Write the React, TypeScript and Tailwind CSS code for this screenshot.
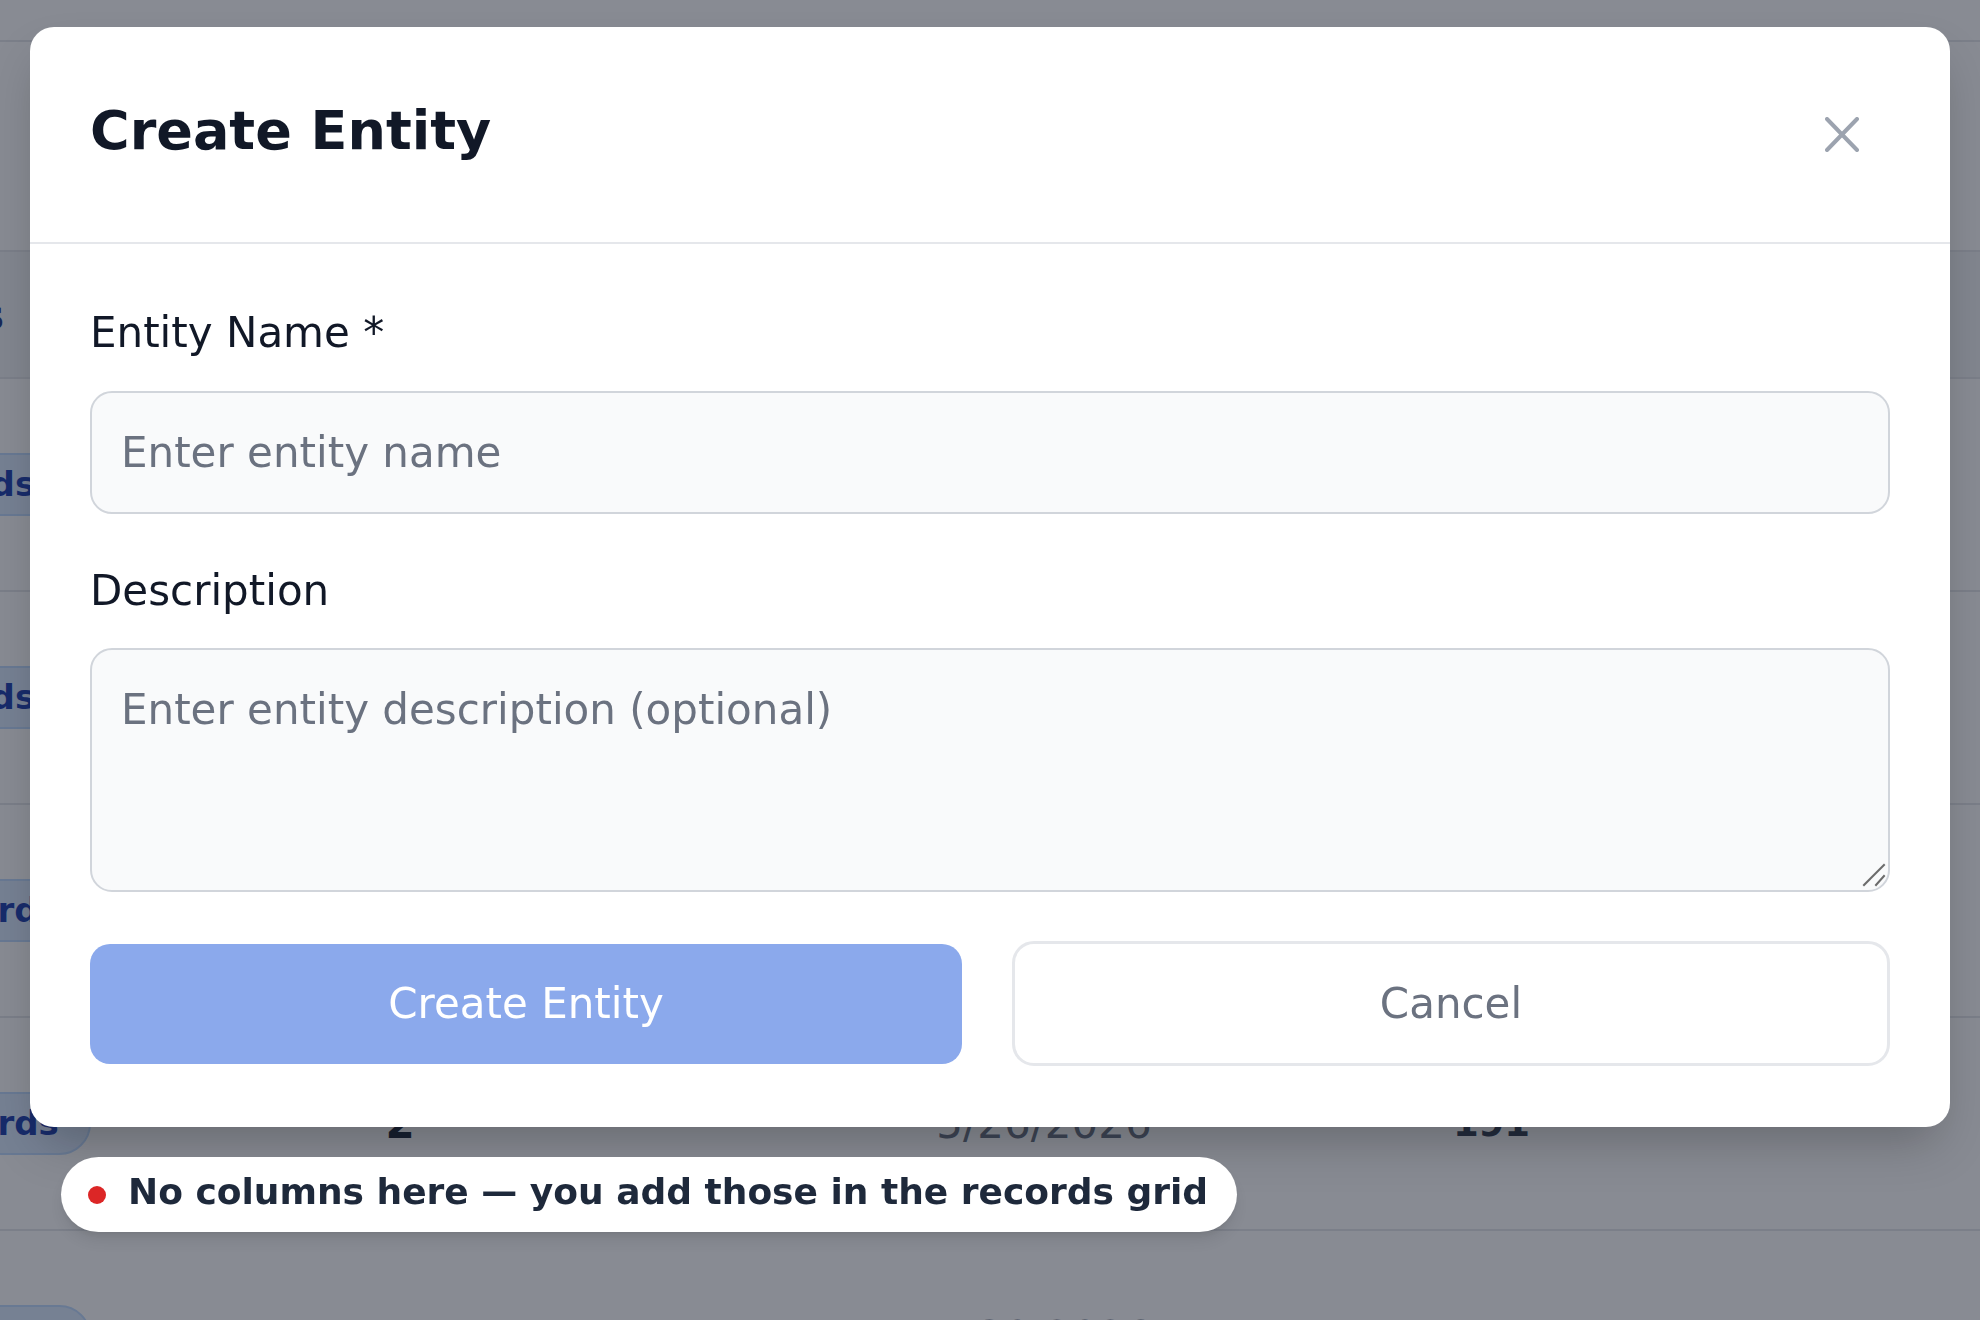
import React from 'react';

interface RecordRow {
  badge: string;
  count: string;
  date: string;
  total: string;
}

const rows: RecordRow[] = [
  { badge: '3 records', count: '5', date: '4/12/2026', total: '328' },
  { badge: '8 records', count: '3', date: '4/28/2026', total: '245' },
  { badge: '12 records', count: '4', date: '5/09/2026', total: '212' },
  { badge: '24 records', count: '2', date: '5/26/2026', total: '191' },
  { badge: '16 records', count: '1', date: '7/30/2026', total: '87' },
];

const font = "font-['DejaVu_Sans','Liberation_Sans',sans-serif]";

function CloseIcon() {
  return (
    <svg width="34" height="35" viewBox="0 0 34 35" fill="none" stroke="#9ca3af" strokeWidth="4" strokeLinecap="round">
      <path d="M2 2 32 33" />
      <path d="M32 2 2 33" />
    </svg>
  );
}

// resize grip drawn over the textarea corner
function ResizeGrip() {
  return (
    <svg width="24" height="24" viewBox="0 0 24 24" fill="none" stroke="#6b6b6b" strokeWidth="2" strokeLinecap="square">
      <path d="M2 22 22 2" />
      <path d="M14 22 22 13" />
    </svg>
  );
}

export default function App() {
  return (
    <div className={`h-screen overflow-hidden bg-white ${font}`}>
      {/* page behind the dialog */}
      <div className="h-[42px] border-b-2 border-gray-200" />
      <div className="h-[208px]" />
      <div className="h-[129px] border-y-2 border-gray-200 bg-gray-100 flex items-center">
        <div className="w-[4px] flex justify-end">
          <span className="whitespace-nowrap text-[40px] font-bold text-[#1e3a8a]">Records</span>
        </div>
      </div>
      {rows.map(row => (
        <div key={row.date} className="h-[213px] border-b-2 border-gray-200 flex items-center">
          <div className="w-[269px] -ml-[177px] shrink-0 flex">
            <span className="shrink-0 whitespace-nowrap h-[63px] flex items-center rounded-full border-2 border-[#bfdbfe] bg-[#dbeafe] px-[30px] text-[34px] font-bold text-[#1e40af]">
              {row.badge}
            </span>
          </div>
          <div className="w-[616px] shrink-0 text-center text-[42px] font-semibold text-gray-800">{row.count}</div>
          <div className="w-[672px] shrink-0 text-center text-[42px] text-gray-500">{row.date}</div>
          <div className="w-[223px] shrink-0 text-center text-[37px] font-bold text-gray-700">{row.total}</div>
        </div>
      ))}

      {/* overlay */}
      <div className="fixed inset-0 bg-[#111827]/50" />

      {/* dialog */}
      <div className="fixed left-[30px] right-[30px] top-[27px] rounded-3xl bg-white shadow-2xl">
        <div className="h-[217px] border-b-2 border-[#e5e7eb] flex items-center justify-between px-[60px]">
          <h2 className="mb-[8px] text-[54px] font-bold text-[#111827] leading-none">Create Entity</h2>
          <button className="mr-[31px] flex items-center">
            <CloseIcon />
          </button>
        </div>

        <div className="px-[60px] pt-[57px] pb-[61px]">
          <label className="block text-[42px] leading-[1.5] text-[#111827] mb-[27px]">Entity Name *</label>
          <input
            className="block w-full rounded-[22px] border-2 border-[#d1d5db] bg-[#f9fafb] px-[29px] py-[28px] text-[42px] leading-[1.5] text-[#111827] placeholder:text-[#6b7280] outline-none"
            placeholder="Enter entity name"
          />

          <label className="block mt-[45px] text-[42px] leading-[1.5] text-[#111827] mb-[26px]">Description</label>
          <div className="relative">
            <textarea
              className="block w-full h-[244px] rounded-[22px] border-2 border-[#d1d5db] bg-[#f9fafb] px-[29px] py-[28px] text-[42px] leading-[1.5] text-[#111827] placeholder:text-[#6b7280] outline-none resize-none"
              placeholder="Enter entity description (optional)"
            />
            <div className="pointer-events-none absolute right-[4px] bottom-[5px]">
              <ResizeGrip />
            </div>
          </div>

          <div className="mt-[49px] flex items-center gap-[50px]">
            <button className="flex-1 h-[120px] rounded-[20px] bg-[#8ba9ec] text-[42px] text-white">Create Entity</button>
            <button className="flex-1 h-[125px] rounded-[22px] border-[3px] border-[#e5e7eb] bg-white text-[42px] text-[#6b7280]">Cancel</button>
          </div>
        </div>
      </div>

      {/* toast */}
      <div className="fixed left-[61px] top-[1157px] h-[75px] rounded-full bg-white shadow-lg flex items-center gap-[22px] pl-[27px] pr-[29px]">
        <span className="w-[18px] h-[18px] rounded-full bg-[#dc2626]" />
        <span className="mb-[6px] whitespace-nowrap text-[36px] font-bold leading-none text-[#1e293b]">
          No columns here — you add those in the records grid
        </span>
      </div>
    </div>
  );
}
